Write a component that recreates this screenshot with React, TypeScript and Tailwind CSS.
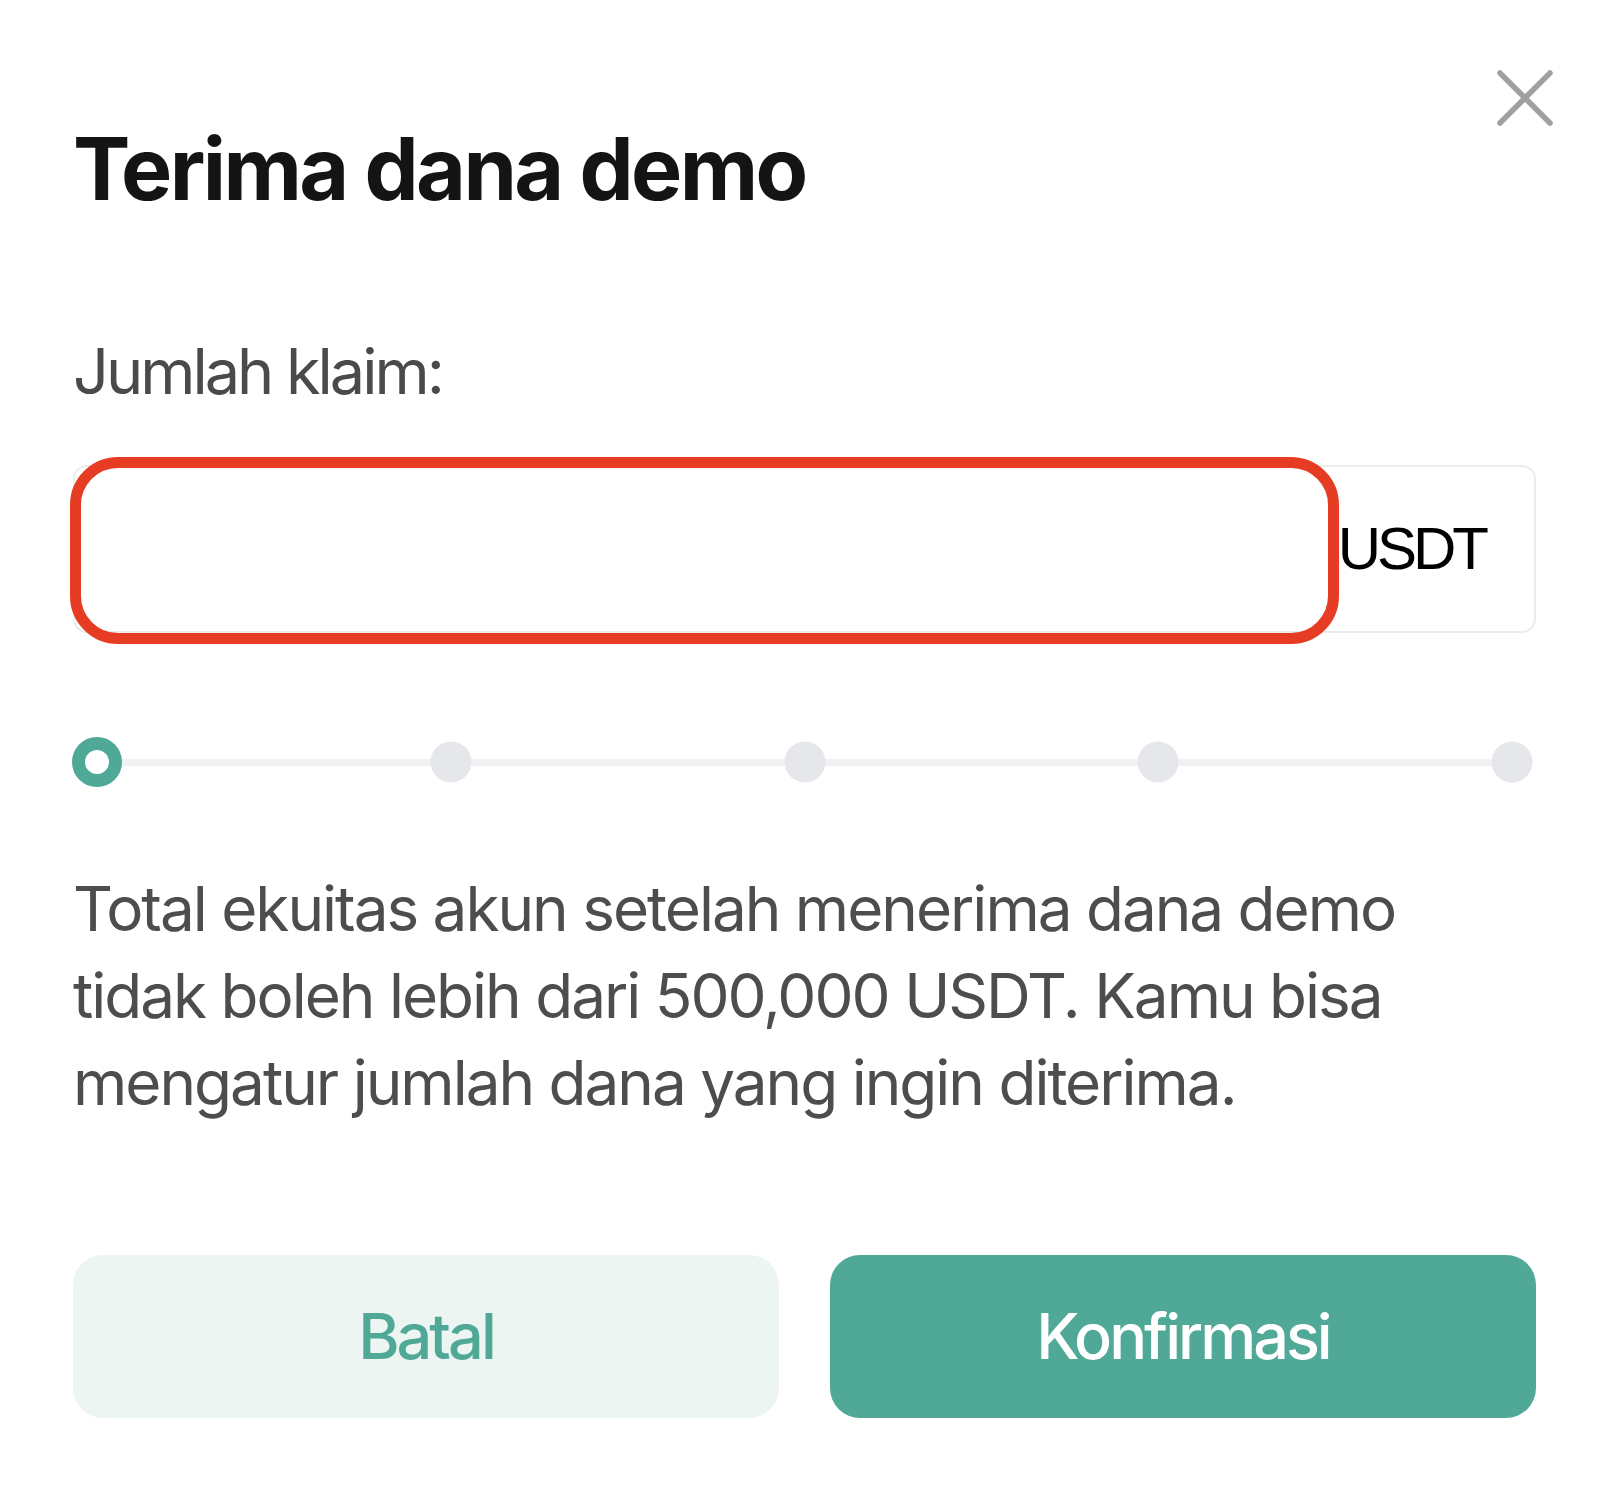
import { useState } from "react";

const STEPS = [0, 25, 50, 75, 100];

function CloseIcon() {
  return (
    <svg viewBox="0 0 56 56" className="w-[56px] h-[56px]" fill="none">
      <path
        d="M3 3 L53 53 M53 3 L3 53"
        stroke="#a0a0a0"
        strokeWidth="5.5"
        strokeLinecap="round"
      />
    </svg>
  );
}

function AmountSlider({ value }: { value: number }) {
  return (
    <div className="relative mx-[24px] h-[50px] flex items-center">
      {/* track */}
      <div className="w-full h-[7px] bg-[#f0f1f3] rounded-full" />
      {STEPS.map((s) => {
        const active = s === value;
        return (
          <div
            key={s}
            className="absolute top-1/2 -translate-x-1/2 -translate-y-1/2"
            style={{ left: `${s}%` }}
          >
            {active ? (
              <div className="w-[50px] h-[50px] rounded-full border-[13px] border-[#4fa996] bg-white" />
            ) : (
              <div className="w-[41px] h-[41px] rounded-full bg-[#e5e7ea]" />
            )}
          </div>
        );
      })}
    </div>
  );
}

export default function App() {
  const [amount, setAmount] = useState("");

  return (
    <div className="w-[1600px] h-[1486px] bg-white pl-[73px] pr-[47px] font-['Inter',sans-serif]">
      <div className="flex justify-end pt-[70px]">
        <button>
          <CloseIcon />
        </button>
      </div>

      <div className="pr-[17px]">
        <h1 className="text-[86px] leading-none font-bold text-[#141414] tracking-[-2.6px]">
          Terima dana demo
        </h1>

        <p className="mt-[128px] text-[63px] leading-none text-[#4a4a4a] tracking-[-3px]">
          Jumlah klaim:
        </p>

        <div className="relative mt-[62px] h-[168px] flex items-center border-2 border-[#ececec] rounded-[14px]">
          <input
            value={amount}
            onChange={(e) => setAmount(e.target.value)}
            className="flex-1 min-w-0 h-full bg-transparent outline-none px-8 text-[60px]"
          />
          <span className="pr-[49px] pl-2 text-[60px] text-black font-['Liberation_Sans',sans-serif] tracking-[-4px]">
            USDT
          </span>
          {/* highlight around the amount field */}
          <div className="absolute left-[-5px] top-[-10px] w-[1269px] h-[187px] border-[11px] border-[#e63c23] rounded-[48px] pointer-events-none" />
        </div>

        <div className="mt-[104px]">
          <AmountSlider value={0} />
        </div>

        <p className="mt-[78px] w-[1420px] text-[62px] leading-[87px] text-[#4d4d4d] tracking-[-2px]">
          Total ekuitas akun setelah menerima dana demo tidak boleh lebih dari
          500,000 USDT. Kamu bisa mengatur jumlah dana yang ingin diterima.
        </p>

        <div className="mt-[129px] grid grid-cols-2 gap-[51px]">
          <button className="h-[163px] rounded-[30px] bg-[#edf5f3] text-[#4fa996] text-[63px] font-medium tracking-[-3px]">
            Batal
          </button>
          <button className="h-[163px] rounded-[30px] bg-[#4fa996] text-white text-[63px] font-medium tracking-[-3px]">
            Konfirmasi
          </button>
        </div>
      </div>
    </div>
  );
}
